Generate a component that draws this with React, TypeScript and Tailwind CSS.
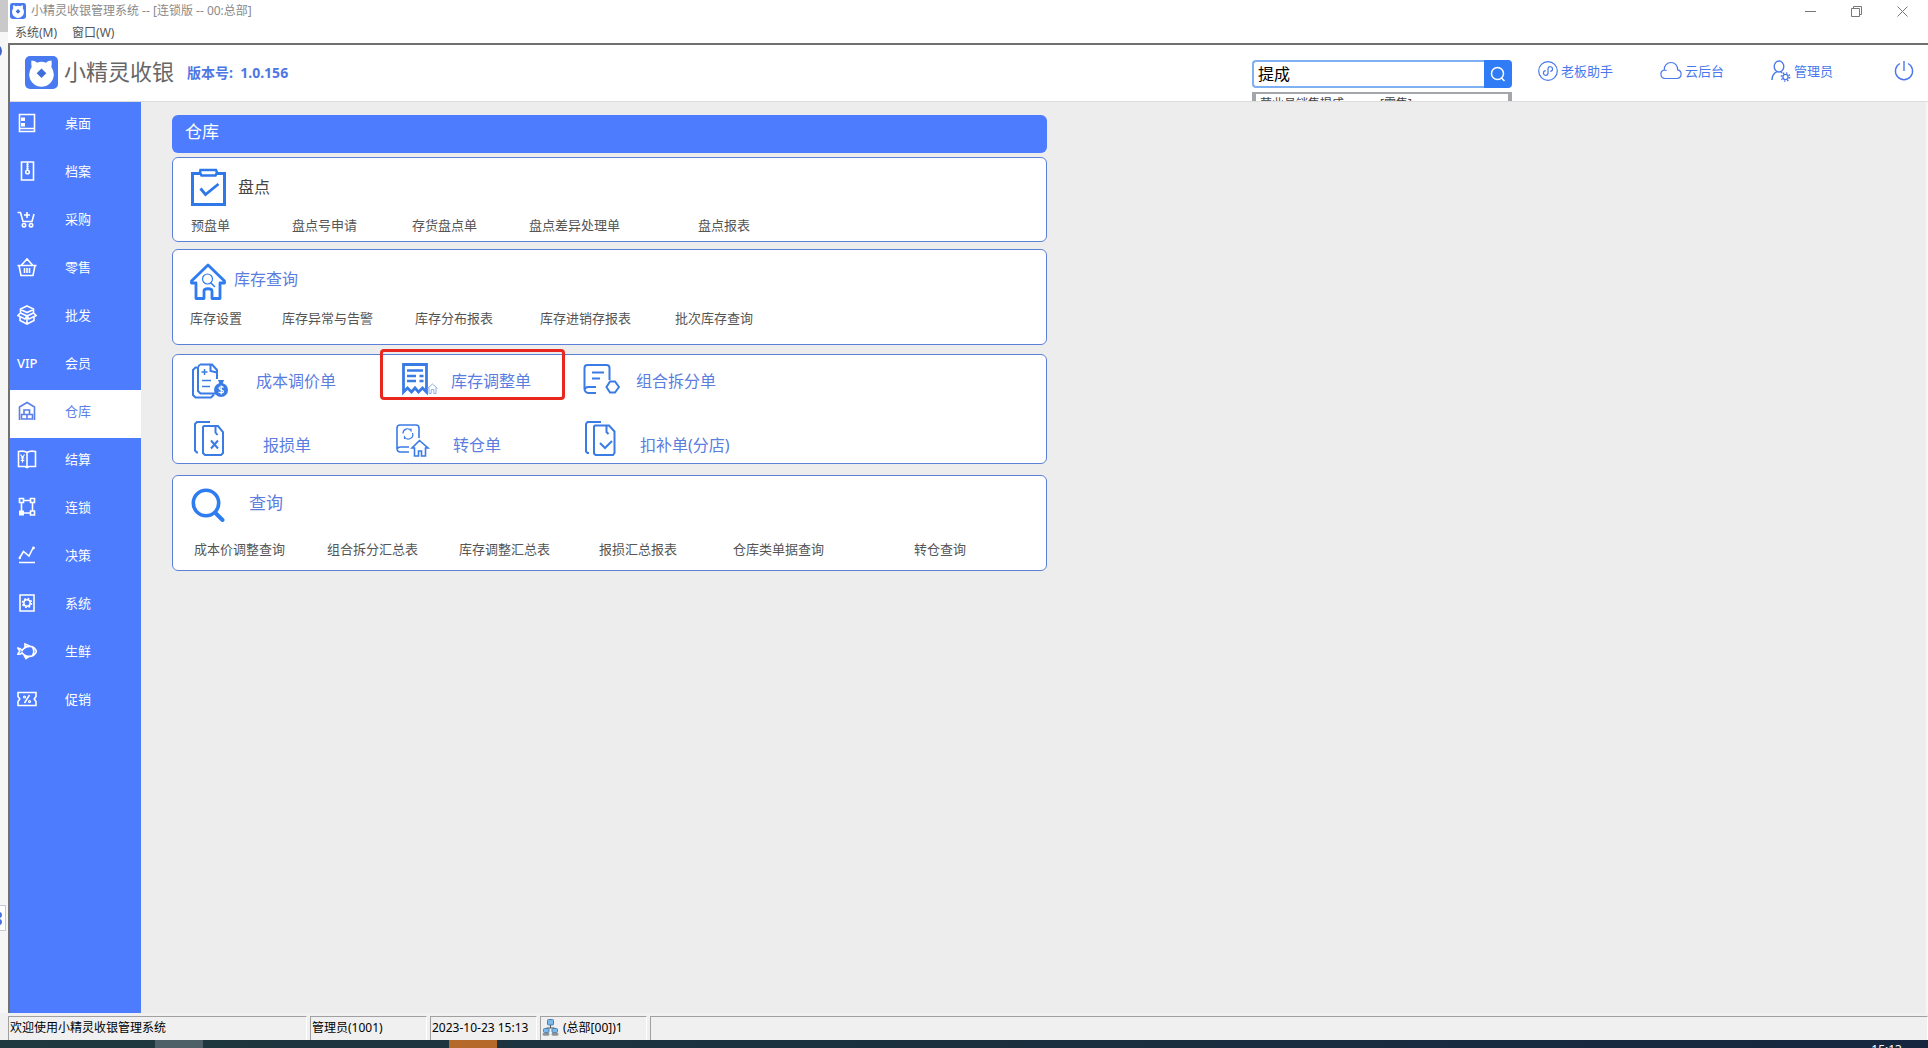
import React, { useState } from 'react';
import clsx from 'clsx';

interface IconProps {
  className?: string;
  children?: React.ReactNode;
}

interface MenuItem {
  label: string;
  icon: React.ReactNode;
}

interface LinkCardProps {
  title: string;
  icon: React.ReactNode;
  links: string[];
  className?: string;
  headClass?: string;
  titleClass?: string;
  listClass?: string;
}

function SideIcon({ children }: IconProps) {
  return (
    <svg width="20" height="20" viewBox="0 0 20 20" fill="none" stroke="currentColor" strokeWidth="1.6" aria-hidden="true">
      {children}
    </svg>
  );
}

function LogoMark({ className }: IconProps) {
  return (
    <svg className={className} viewBox="0 0 33 33" aria-hidden="true">
      <rect width="33" height="33" rx="5" fill="#4a7af0" />
      <path d="M6.5 4.500c2 0 4 .8 5.500 2.200a13 13 0 0 1 9 0c1.500-1.400 3.500-2.200 5.500-2.200.3 2.500.3 4.500-.2 6.500a12.300 12.300 0 1 1-19.600 0c-.5-2-.5-4-.2-6.500z" fill="#fff" />
      <path d="M16.500 12.500l4.800 4.800-4.800 4.800-4.800-4.800z" fill="#3f6ddc" />
    </svg>
  );
}

const menuItems: MenuItem[] = [
  {
    label: '桌面',
    icon: (
      <SideIcon>
        <path d="M2.500 1.500h15v17h-15zM2.500 15.500h15" />
        <path d="M4 4.500h4v3.500h-4zM4 10h4v3.500h-4z" fill="currentColor" stroke="none" />
      </SideIcon>
    ),
  },
  {
    label: '档案',
    icon: (
      <SideIcon>
        <path d="M4.500 1h12v18h-12zM10.500 1v8" />
        <circle cx="10.500" cy="11" r="1.800" />
        <path d="M10.500 3v5" strokeWidth="2" strokeDasharray="1 1" />
      </SideIcon>
    ),
  },
  {
    label: '采购',
    icon: (
      <SideIcon>
        <path d="M0.500 3.500h3l2.500 9h9l2-7.500M7 6h6M10 3v6" />
        <circle cx="7" cy="16.200" r="1.700" />
        <circle cx="14" cy="16.200" r="1.700" />
      </SideIcon>
    ),
  },
  {
    label: '零售',
    icon: (
      <SideIcon>
        <path d="M0.500 8.500h19M2 8.500l2 10h12l2-10M4.500 8L10 2l5.500 6M7.500 11v5M10 11v5M12.500 11v5" />
      </SideIcon>
    ),
  },
  {
    label: '批发',
    icon: (
      <SideIcon>
        <path d="M10 1l6.500 3v4L10 11 3.500 8V4zM3.500 4.500L10 7.500l6.500-3M3.500 8L.8 10.500 8 14l2-3 2 3 7.200-3.500L16.500 8M3 12v3.500l7 3.500 7-3.500V12M10 11v8" />
      </SideIcon>
    ),
  },
  {
    label: '会员',
    icon: <span className="text-[13px] leading-5 font-medium">VIP</span>,
  },
  {
    label: '仓库',
    icon: (
      <SideIcon>
        <path d="M2.500 19V6L10 1.500 17.500 6v13" />
        <path d="M7 9h5.500v4.500H7zM4.500 13.500h5.500V18H4.500zM10 13.500h5.500V18H10z" />
      </SideIcon>
    ),
  },
  {
    label: '结算',
    icon: (
      <SideIcon>
        <path d="M10 3.500C8 2 4 2 1.500 2.500v15H8l2 1 2-1h6.500v-15C16 2 12 2 10 3.500zM10 3.500v15" />
        <path d="M3.500 5.500l2 3 2-3M5.500 8.500v5M3.800 9h3.500M3.800 11.300h3.500" strokeWidth="1.200" />
      </SideIcon>
    ),
  },
  {
    label: '连锁',
    icon: (
      <SideIcon>
        <path d="M2.500 1.500h4v4h-4zM13.500 1.500h4v4h-4zM13.500 14h4v4h-4zM6.500 3.500h7M4.500 5.500V14M15.500 5.500V14M6.500 16h7" />
        <path d="M2 13.500h5v5H2z" fill="currentColor" stroke="none" />
      </SideIcon>
    ),
  },
  {
    label: '决策',
    icon: (
      <SideIcon>
        <path d="M2.500 13l4-6.500L12 11l4-8M2 17.500h16" />
        <circle cx="16.500" cy="3" r="1.400" fill="currentColor" stroke="none" />
        <circle cx="2.800" cy="13" r="1.200" fill="currentColor" stroke="none" />
      </SideIcon>
    ),
  },
  {
    label: '系统',
    icon: (
      <SideIcon>
        <path d="M3 2h14v16H3z" />
        <circle cx="10" cy="10" r="3.200" />
        <circle cx="10" cy="10" r="4.500" strokeDasharray="1.800 1.730" />
      </SideIcon>
    ),
  },
  {
    label: '生鲜',
    icon: (
      <SideIcon>
        <path d="M0.800 7l2 3-2 3.200c2 .3 3.200-.2 4.200-1.500 2 2.800 4.500 3.700 7.500 3.700 3.500 0 6-2.500 7-5-1-2.500-3.500-5-7-5-3 0-5.500 1.500-7.500 4-1-1.500-2.200-2.300-4.200-2.400zM8 6.500V3l5 2.300M7 14l2 3.500 3-2.200M15.500 6c1.500 2.500 1.500 6 0 8.500" />
      </SideIcon>
    ),
  },
  {
    label: '促销',
    icon: (
      <SideIcon>
        <path d="M1 3.500h18v4l-1.800 2.500L19 12.500v4H1v-4L2.800 10 1 7.500zM12.500 6l-5 8" />
        <circle cx="7.500" cy="8" r="1" strokeWidth="1.200" />
        <circle cx="12.500" cy="12.500" r="1" strokeWidth="1.200" />
      </SideIcon>
    ),
  },
];

function ClipboardIcon() {
  return (
    <svg width="35" height="38" viewBox="0 0 35 38" fill="none" stroke="#2f78e8" strokeWidth="3" aria-hidden="true">
      <path d="M9 5.500H1.500v31h32v-31H26" />
      <path d="M9.500 2h15.500l1 2.500-1.500 3h-14L9 4.500z" strokeWidth="2.500" />
      <path d="M9.500 20.500l5 6L27.500 16" strokeWidth="2.800" />
    </svg>
  );
}

function HouseSearchIcon() {
  return (
    <svg width="36" height="37" viewBox="0 0 36 37" fill="none" stroke="#2f7cf0" strokeWidth="2.800" strokeLinejoin="round" strokeLinecap="round" aria-hidden="true">
      <path d="M18 2L1.500 18v2H6v15.500h8V28c0-3 8-3 8 0v7.500h8V20h4.500v-2z" />
      <circle cx="17.500" cy="16" r="5" strokeWidth="1.200" />
      <path d="M21 20l3.500 3.500" strokeWidth="1.500" />
    </svg>
  );
}

function MagnifierIcon() {
  return (
    <svg width="35" height="34" viewBox="0 0 35 34" fill="none" stroke="#2f7cf0" strokeLinecap="round" aria-hidden="true">
      <circle cx="15" cy="15" r="12.700" strokeWidth="3.600" />
      <path d="M25 25.500l6.500 6.500" strokeWidth="4" />
    </svg>
  );
}

function DocIcon({ children }: IconProps) {
  return (
    <svg width="38" height="36" viewBox="0 0 38 36" fill="none" stroke="#3a7be6" strokeWidth="2" aria-hidden="true">
      {children}
    </svg>
  );
}

function LinkCard({ title, icon, links, className, headClass, titleClass, listClass }: LinkCardProps) {
  return (
    <section className={clsx('rounded-md border border-[#5c7fd8] bg-white', className)}>
      <h2 className={clsx('flex items-center', headClass)}>
        {icon}
        <span className={titleClass}>{title}</span>
      </h2>
      <ul className={clsx('grid text-[13px] leading-5 text-[#555]', listClass)}>
        {links.map((link) => (
          <li key={link}>
            <a href="#" className="whitespace-nowrap">{link}</a>
          </li>
        ))}
      </ul>
    </section>
  );
}

function ActionButton({ label, icon, className, highlighted }: { label: string; icon: React.ReactNode; className: string; highlighted?: boolean }) {
  return (
    <button type="button" className={clsx('relative grid text-left text-[16px] leading-6 text-[#5b7de0]', className)}>
      {icon}
      <span>{label}</span>
      {highlighted && <span className="absolute -top-[14px] -left-5 h-[51px] w-[185px] rounded-sm border-3 border-[#e8281e]" />}
    </button>
  );
}

function TitleBar() {
  return (
    <div className="flex h-6 items-center bg-white pb-0.5 pl-[10px] text-[12px] text-[#8a8a8a]">
      <LogoMark className="size-4" />
      <span className="ml-[5px] flex-auto whitespace-pre">小精灵收银管理系统 -- [连锁版 -- 00:总部]</span>
      <div className="flex gap-[35px] pr-5 text-[#777]">
        <button type="button" aria-label="最小化">
          <svg width="11" height="11" viewBox="0 0 11 11" fill="none" stroke="currentColor"><path d="M0 5.500h11" /></svg>
        </button>
        <button type="button" aria-label="还原">
          <svg width="11" height="11" viewBox="0 0 11 11" fill="none" stroke="currentColor"><path d="M.5 2.500h8v8h-8zM2.500 2.500v-2h8v8h-2" /></svg>
        </button>
        <button type="button" aria-label="关闭">
          <svg width="11" height="11" viewBox="0 0 11 11" fill="none" stroke="currentColor"><path d="M.5.5l10 10M10.500.5l-10 10" /></svg>
        </button>
      </div>
    </div>
  );
}

function SearchBox() {
  const [keyword, setKeyword] = useState<string>('提成');

  return (
    <form className="relative flex h-7 w-[260px]" onSubmit={(event) => event.preventDefault()}>
      <input
        className="min-w-0 flex-auto rounded-l-sm border-2 border-r-0 border-[#7fb0f2] bg-white pl-1 text-[16px] leading-6 text-black outline-none"
        type="text"
        aria-label="搜索"
        value={keyword}
        onChange={(event: React.ChangeEvent<HTMLInputElement>) => setKeyword(event.target.value)}
      />
      <button type="submit" aria-label="查找" className="flex w-7 items-center justify-center rounded-r-sm bg-[#2f7cf6] text-white">
        <svg width="16" height="16" viewBox="0 0 16 16" fill="none" stroke="currentColor" strokeWidth="1.500">
          <circle cx="7.500" cy="7.500" r="6" />
          <path d="M11.500 12l3 3" />
        </svg>
      </button>
      <div className="absolute inset-x-0 top-8 flex h-10 gap-9 border-x-4 border-t-2 border-[#a3a6ab] bg-white pt-0.5 pl-1 text-[12px] leading-4 text-[#444]">
        <span>营业员销售提成</span>
        <span>[零售]</span>
      </div>
    </form>
  );
}

function Header() {
  return (
    <header className="flex h-14 shrink-0 items-center overflow-hidden bg-white pr-[14px] pb-0.5 pl-[15px]">
      <LogoMark className="size-[33px]" />
      <h1 className="ml-[6px] pb-0.5 text-[22px] leading-8 text-[#666]">小精灵收银</h1>
      <span className="ml-[13px] text-[14px] font-bold text-[#4e77e6]">版本号:&nbsp; 1.0.156</span>
      <div className="ml-auto pt-1">
        <SearchBox />
      </div>
      <nav className="ml-[26px] flex items-center gap-[47px] pb-0.5 text-[13px] leading-5 text-[#4a78ec]">
        <a href="#" className="flex items-center gap-[3px]">
          <svg width="20" height="22" viewBox="0 0 20 22" fill="none" stroke="currentColor" strokeWidth="1.200">
            <circle cx="10" cy="11" r="9.300" />
            <path d="M10 14V8.500a2.300 2.300 0 1 1 2.300 2.800M10 9v4.500a2.300 2.300 0 1 1-2.300-2.800" />
          </svg>
          老板助手
        </a>
        <a href="#" className="flex items-center gap-[3px]">
          <svg width="22" height="20" viewBox="0 0 22 20" fill="none" stroke="currentColor" strokeWidth="1.200">
            <path d="M5 17.500a4.300 4.300 0 0 1-.7-8.500c1 0 1.700.2 2.300.5M4.300 9C4 4.500 7 1.500 11 1.500s6.800 3 6.600 7.300a4.400 4.400 0 0 1-.6 8.700H5" />
          </svg>
          云后台
        </a>
        <a href="#" className="flex items-center gap-[3px]">
          <svg width="20" height="22" viewBox="0 0 20 22" fill="none" stroke="currentColor" strokeWidth="1.400">
            <ellipse cx="8" cy="6.500" rx="4.800" ry="5.500" />
            <path d="M1 20c0-4 2-7 5-8.300M10 11.500l1 1.500" />
            <circle cx="14.500" cy="17" r="2.600" />
            <circle cx="14.500" cy="17" r="4.200" strokeDasharray="1.500 1.800" />
          </svg>
          管理员
        </a>
        <button type="button" aria-label="退出" className="ml-[14px]">
          <svg width="20" height="20" viewBox="0 0 20 20" fill="none" stroke="currentColor" strokeWidth="1.400">
            <path d="M6 2.500a8.600 8.600 0 1 0 8 0M10 0v10" />
          </svg>
        </button>
      </nav>
    </header>
  );
}

function Sidebar() {
  const [active, setActive] = useState<string>('仓库');

  return (
    <nav className="w-[131px] shrink-0 bg-[#4d7cfe]">
      {menuItems.map((item) => (
        <button
          key={item.label}
          type="button"
          className={clsx(
            'flex h-12 w-full items-center pb-[6px] pl-[7px] text-left text-[13px] leading-5',
            active === item.label ? 'bg-white text-[#5b7fe8]' : 'text-white'
          )}
          onClick={() => setActive(item.label)}
        >
          <span className="w-12">{item.icon}</span>
          {item.label}
        </button>
      ))}
    </nav>
  );
}

function ActionCard() {
  return (
    <section className="mt-[9px] flex h-[110px] flex-col gap-[22px] rounded-md border border-[#5c7fd8] bg-white pt-2 pl-[19px]">
      <div className="grid grid-cols-[208px_182px_1fr]">
        <ActionButton
          label="成本调价单"
          className="grid-cols-[64px_1fr] items-center"
          icon={
            <DocIcon>
              <path d="M5 4.500H3.500L1 7v25l2.500 2.500H19l3-3" />
              <path d="M8 1.500h12l5 5.500v9M6 4v24l2.500 2.500H24M6 4l2-2.500M18.500 1.500V8l6.500 1.500" />
              <path d="M9.500 9h6M12.500 6v6M10 17.500h9M10 23.500h8" strokeWidth="1.500" />
              <circle cx="29" cy="27" r="7" fill="#3a7be6" stroke="none" />
              <path d="M26 17h6l-1.500 4h-3z" fill="#3a7be6" stroke="none" />
              <path d="M31.500 24.500c-1.500-1.300-4.500-1-4.500.7 0 2 4.500 1.300 4.500 3.300 0 1.700-3.500 1.800-5 .4M29.200 22.500v9" stroke="#fff" strokeWidth="1.200" />
            </DocIcon>
          }
        />
        <ActionButton
          label="库存调整单"
          className="grid-cols-[51px_1fr] items-center"
          highlighted
          icon={
            <DocIcon>
              <path d="M3.500 29V1.500h23V29l-4-4-4 4-3.500-4-3.500 4-4-4z" strokeWidth="2.800" />
              <path d="M7 7.500h16M7 13h9M7 18h9M19.500 13h4M19.500 18h4" strokeWidth="2.400" />
              <path d="M27.500 25.500l5-4.500 5 4.500M29 24.500v6h2.200v-4h2.600v4H36v-6" stroke="#8fb0ea" strokeWidth="1" />
            </DocIcon>
          }
        />
        <ActionButton
          label="组合拆分单"
          className="grid-cols-[54px_1fr] items-center"
          icon={
            <DocIcon>
              <path d="M14 30H6.500A4.500 4.500 0 0 1 2.500 26V5q0-3 3-3h19q3 0 3 3v12M14 24H6.500a4 4 0 0 0-4 3.500" />
              <path d="M10 9.500h12M10 15.500h8" />
              <path d="M28 18.500h5l4 5.500-4 5.500h-5L24.500 24z" />
            </DocIcon>
          }
        />
      </div>
      <div className="grid grid-cols-[203px_187px_1fr]">
        <ActionButton
          label="报损单"
          className="grid-cols-[71px_1fr] items-end"
          icon={
            <DocIcon>
              <path d="M6 31.500H5L3 29.500V3l2-2h13" />
              <path d="M12 5h14l5 6v21l-2 2H13l-2-2V6zM23.500 5v6.500l2 2.500M19 19.500l7 8M26 19.500l-7 8" />
            </DocIcon>
          }
        />
        <ActionButton
          label="转仓单"
          className="grid-cols-[58px_1fr] items-end"
          icon={
            <DocIcon>
              <g strokeWidth="1.600">
                <path d="M14 31H5.500Q2 31 2 27.500V7q0-3 3-3h16q3 0 3 3v10M14 26H5.500Q2.500 26 2 28.500" />
                <path d="M8 12.500a4.500 4.500 0 0 1 8-3v-2M17.500 12a4.500 4.500 0 0 1-8 4v2" strokeWidth="1.200" />
                <path d="M24.500 19.500l-7.500 7.500h2.500v8h4v-5h3v5h4v-8H33z" />
              </g>
            </DocIcon>
          }
        />
        <ActionButton
          label="扣补单(分店)"
          className="grid-cols-[58px_1fr] items-end"
          icon={
            <DocIcon>
              <path d="M7 32H5.500L4 30.500V3l1.500-2H19" />
              <path d="M13 4.500h14l5.500 6v21.500l-1.500 2H13.500L12 32.500V5.500zM24.500 4.500V11l2 2M18 22l5 5 7-7" />
            </DocIcon>
          }
        />
      </div>
    </section>
  );
}

function StatusBar() {
  const cell = 'flex items-center border-t border-l border-[#a0a0a0] border-r border-r-white pb-0.5 pl-px whitespace-nowrap';

  return (
    <footer className="flex h-[27px] shrink-0 gap-[3px] bg-[#f0f0f0] pt-[3px] pl-2 text-[12px] text-black">
      <div className={clsx(cell, 'w-[299px]')}>欢迎使用小精灵收银管理系统</div>
      <div className={clsx(cell, 'w-[117px]')}>管理员(1001)</div>
      <div className={clsx(cell, 'w-[107px]')}>2023-10-23 15:13</div>
      <div className={clsx(cell, 'w-[107px] gap-1')}>
        <svg width="17" height="17" viewBox="0 0 17 17" aria-hidden="true">
          <path d="M8.500 6v3M4.500 11V9h8v2" stroke="#555" fill="none" />
          <rect x="5.500" y=".5" width="6" height="5.500" rx="1" fill="#7db8ea" stroke="#4a7fb0" />
          <rect x="1.500" y="9.500" width="5.500" height="4" rx="1" fill="#7db8ea" stroke="#4a7fb0" />
          <rect x="10" y="9.500" width="5.500" height="4" rx="1" fill="#7db8ea" stroke="#4a7fb0" />
          <ellipse cx="4" cy="15.200" rx="3.500" ry="1.600" fill="#8d9299" />
          <ellipse cx="13" cy="15.200" rx="3.500" ry="1.600" fill="#8d9299" />
        </svg>
        (总部[00])1
      </div>
      <div className={clsx(cell, 'flex-auto')} />
    </footer>
  );
}

export default function App() {
  return (
    <div className="flex h-screen flex-col overflow-hidden bg-white font-['Noto_Sans','Noto_Sans_CJK_SC',sans-serif]">
      <div className="relative flex min-h-0 flex-auto flex-col">
        <TitleBar />
        <div className="flex h-[19px] shrink-0 items-center gap-[15px] pb-0.5 pl-[15px] text-[12px] text-[#555]">
          <button type="button">系统(M)</button>
          <button type="button">窗口(W)</button>
        </div>

        <div className="ml-2 flex min-h-0 flex-auto flex-col border-t-2 border-l-2 border-[#70716f]">
          <Header />
          <div className="flex min-h-0 flex-auto border-t border-[#dcdcdc]">
            <Sidebar />
            <main className="flex-auto border-r-2 border-[#f6f6f6] bg-[#ededed] pt-[13px] pl-[31px]">
              <div className="w-[875px] max-w-full">
                <h2 className="flex h-[38px] items-center rounded-md bg-[#4d7cfe] pb-1 pl-[13px] text-[17px] text-white">仓库</h2>
                <LinkCard
                  title="盘点"
                  icon={<ClipboardIcon />}
                  className="mt-1 h-[85px] pt-[10px] pl-[18px]"
                  headClass="h-[38px] gap-3"
                  titleClass="text-[16px] text-[#444]"
                  listClass="mt-[9px] grid-cols-[101px_120px_117px_169px_1fr]"
                  links={['预盘单', '盘点号申请', '存货盘点单', '盘点差异处理单', '盘点报表']}
                />
                <LinkCard
                  title="库存查询"
                  icon={<HouseSearchIcon />}
                  className="mt-[7px] h-24 pt-3 pl-[17px]"
                  headClass="h-[38px] gap-2"
                  titleClass="pb-1 text-[16px] text-[#5b7de0]"
                  listClass="mt-2 grid-cols-[92px_133px_125px_135px_1fr]"
                  links={['库存设置', '库存异常与告警', '库存分布报表', '库存进销存报表', '批次库存查询']}
                />
                <ActionCard />
                <LinkCard
                  title="查询"
                  icon={<MagnifierIcon />}
                  className="mt-[11px] h-24 pt-[10px] pl-[18px]"
                  headClass="h-[38px] gap-[23px]"
                  titleClass="pb-1 text-[17px] text-[#5b7de0]"
                  listClass="mt-[15px] grid-cols-[133px_132px_140px_134px_181px_1fr] pl-[3px]"
                  links={['成本价调整查询', '组合拆分汇总表', '库存调整汇总表', '报损汇总报表', '仓库类单据查询', '转仓查询']}
                />
              </div>
            </main>
          </div>
        </div>

        {/* sliver of the window behind, left of the frame */}
        <div className="absolute inset-y-0 left-0 w-2 overflow-hidden bg-[#f6f6f6]">
          <div className="h-8 bg-[#c9c9c9]" />
          <div className="absolute top-11 -left-3 size-[14px] rounded-full bg-[#3f63c8]" />
          <div className="absolute top-[905px] -left-3 h-[26px] w-[18px] border border-[#c8c8d8] bg-white" />
          <div className="absolute top-[912px] -left-1 h-[6px] w-[6px] rounded-full bg-[#4a6fe0]" />
          <div className="absolute top-[919px] -left-1 h-[6px] w-[6px] rounded-full bg-[#4a6fe0]" />
        </div>
      </div>

      <StatusBar />

      <div className="flex h-2 shrink-0 overflow-hidden bg-linear-to-r from-[#20383f] to-[#16263f]">
        <div className="ml-[155px] w-12 bg-[#4d6068]" />
        <div className="ml-[246px] w-12 bg-[#b56a2c]" />
        <span className="ml-auto pt-0.5 pr-[26px] text-[12px] leading-4 text-white">15:13</span>
      </div>
    </div>
  );
}
